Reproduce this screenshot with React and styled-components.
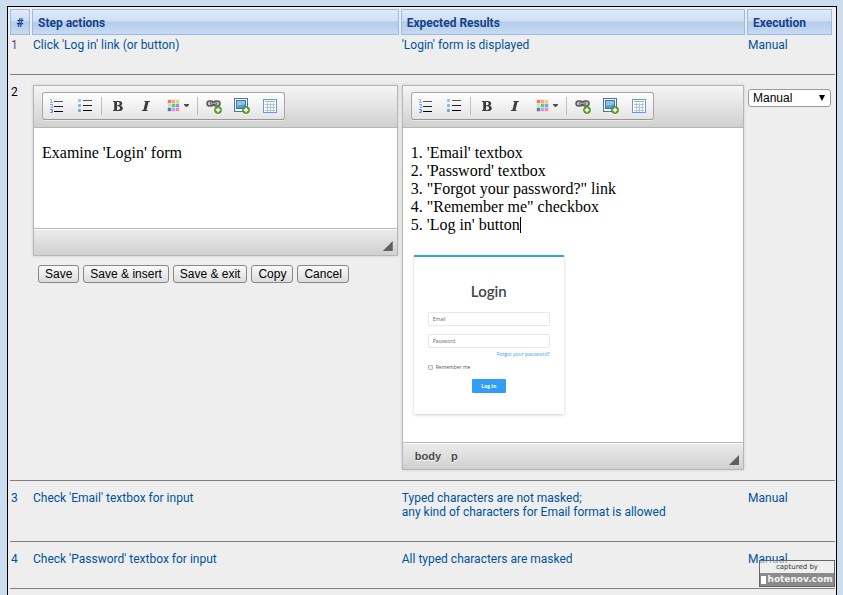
import React from 'react';
import styled, { createGlobalStyle } from 'styled-components';

const GlobalStyle = createGlobalStyle`
  *, *::before, *::after { box-sizing: border-box; }
  body {
    margin: 0;
    background: #ccdded;
    color: #000;
    font: 12px/14px "Trebuchet MS", Roboto, sans-serif;
  }
`;

const Page = styled.main`
  display: flex;
  min-height: 100vh;
  padding: 6px 6px 0 7px;
`;

const Panel = styled.section`
  position: relative;
  flex: 1;
  min-width: 0;
  padding: 2px 1px 6px 2px;
  background: #eee;
  border: 1px solid #000;
  border-bottom: 0;
`;

const StepsTable = styled.table`
  width: 100%;
  table-layout: fixed;
  border-spacing: 0;
`;

const Column = styled.col`
  width: ${(p) => p.$width};
`;

const HeadCell = styled.th`
  padding: 0 2px 0 0;
  text-align: left;
  &:last-child { padding-right: 3px; }
`;

const HeadLabel = styled.div`
  height: 26px;
  padding: 0 5px;
  overflow: hidden;
  border: 1px solid #99bbe8;
  background: linear-gradient(#dfeaf7 0, #cfdff2 11px, #b4cbea 12px, #c6daf4 100%);
  color: #15428b;
  font-weight: bold;
  line-height: 26px;
  text-align: ${(p) => (p.$center ? 'center' : 'left')};
`;

const Cell = styled.td`
  padding: ${(p) => (p.$first ? '3px' : '10px')} 3px ${(p) => (p.$editing ? '10px' : '22px')} 1px;
  border-bottom: 1px solid #808080;
  vertical-align: top;
  color: ${(p) => p.$color || '#00529c'};
`;

const EditorFrame = styled.div`
  border: 1px solid #b6b6b6;
  box-shadow: 0 0 3px rgba(0, 0, 0, 0.15);
  background: #fff;
`;

const EditorTop = styled.div`
  display: flex;
  padding: 6px 8px 7px;
  border-bottom: 1px solid #b6b6b6;
  background: linear-gradient(#f5f5f5, #cfd1cf);
`;

const ToolGroup = styled.div`
  display: flex;
  height: 28px;
  border: 1px solid #a6a6a6;
  border-bottom-color: #979797;
  border-radius: 3px;
  background: linear-gradient(#fff, #e4e4e4);
  box-shadow: 0 1px 0 rgba(255, 255, 255, 0.5);
`;

const ToolButton = styled.button`
  display: flex;
  align-items: center;
  gap: 2px;
  padding: 0 6px;
  border: 0;
  background: none;
`;

const Separator = styled.span`
  width: 1px;
  height: 18px;
  margin: 4px 2px;
  background: #c0c0c0;
`;

const EditorBody = styled.div`
  min-height: 100px;
  padding: 16px 8px 28px;
  outline: 0;
  color: #000;
  font: 16px/18px "Liberation Serif", serif;
`;

const Caret = styled.span`
  display: inline-block;
  width: 1px;
  height: 16px;
  background: #000;
  vertical-align: text-bottom;
`;

const EditorBottom = styled.div`
  display: flex;
  align-items: center;
  justify-content: space-between;
  height: 27px;
  padding: 0 4px 0 12px;
  border-top: 1px solid #b6b6b6;
  background: linear-gradient(#ebebeb, #cfd1cf);
  box-shadow: inset 0 1px 0 #fff;
`;

const ElementPath = styled.div`
  display: flex;
  gap: 10px;
  color: #484848;
  font: bold 11px/14px "Liberation Sans", sans-serif;
  text-shadow: 0 1px 0 #fff;
`;

const ResizeHandle = styled.span`
  align-self: flex-end;
  width: 10px;
  height: 10px;
  margin-bottom: 4px;
  background: #606060;
  clip-path: polygon(100% 0, 100% 100%, 0 100%);
`;

const ActionBar = styled.div`
  display: flex;
  flex-wrap: wrap;
  gap: 4px;
  padding: 9px 5px 0;
`;

const ActionButton = styled.button`
  height: 18px;
  padding: 0 6px;
  border: 1px solid #888;
  border-radius: 3px;
  background: linear-gradient(#fafafa, #dcdcdc);
  color: #000;
  font: 12px/14px "Liberation Sans", sans-serif;
`;

const SelectWrap = styled.div`
  position: relative;
  margin-top: 4px;
  padding-right: 1px;
  &::after {
    content: "";
    position: absolute;
    top: 6px;
    right: 7px;
    width: 6px;
    height: 6px;
    background: #000;
    clip-path: polygon(0 0, 100% 0, 50% 100%);
    pointer-events: none;
  }
`;

const Select = styled.select`
  display: block;
  appearance: none;
  width: 100%;
  height: 18px;
  padding: 0 4px;
  border: 1px solid #9a9a9a;
  border-radius: 3px;
  background: #fff;
  color: #000;
  font: 12px/16px "Liberation Sans", sans-serif;
`;

const LoginCard = styled.div`
  display: flex;
  flex-direction: column;
  width: 150px;
  margin: 21px 0 0 3px;
  padding: 25px 14px 21px;
  border-top: 2px solid #3b9df0;
  box-shadow: 0 1px 3px rgba(0, 0, 0, 0.2);
  color: #555;
  font: 5px/6px "Open Sans", sans-serif;
`;

const LoginTitle = styled.div`
  margin-bottom: 12px;
  color: #444;
  font-family: Lato, sans-serif;
  font-size: 15px;
  font-weight: 600;
  line-height: 18px;
  text-align: center;
`;

const LoginInput = styled.input`
  height: 14px;
  margin-bottom: ${(p) => (p.$last ? '3px' : '8px')};
  padding: 0 4px;
  border: 1px solid #e8e8e8;
  border-radius: 1px;
  font: inherit;
  &::placeholder { color: #666; }
`;

const ForgotLink = styled.a`
  align-self: flex-end;
  color: #3b9df0;
  text-decoration: none;
`;

const Remember = styled.label`
  display: flex;
  align-items: center;
  gap: 3px;
  margin: 7px 0 9px;
`;

const Tick = styled.input`
  appearance: none;
  width: 5px;
  height: 5px;
  margin: 0;
  border: 1px solid #bbb;
  border-radius: 1px;
  background: #eee;
`;

const LoginButton = styled.button`
  align-self: center;
  width: 34px;
  height: 14px;
  padding: 0;
  border: 0;
  border-radius: 1px;
  background: #339cf5;
  color: #fff;
  font: inherit;
  font-weight: bold;
`;

const Badge = styled.aside`
  position: absolute;
  right: 1px;
  top: 553px;
  width: 76px;
  border: 1px solid #666;
  background: rgba(238, 238, 238, 0.6);
  color: #333;
  font: 7px/12px "DejaVu Sans", sans-serif;
  text-align: center;
`;

const BadgeSite = styled.div`
  display: flex;
  align-items: center;
  justify-content: center;
  gap: 1px;
  height: 13px;
  background: #8b8b8b;
  color: #f4f4f4;
  font: bold 9px/13px "DejaVu Sans", sans-serif;
`;

const BadgeMark = styled.span`
  width: 5px;
  height: 8px;
  background: #fff;
`;

const Icon = ({ children }) => (
  <svg width="16" height="16" viewBox="0 0 16 16" aria-hidden="true">{children}</svg>
);

const NumberedIcon = () => (
  <Icon>
    <path d="M5 3.500h9" stroke="#555" />
    <path d="M5 8.500h9" stroke="#222" />
    <path d="M5 13.500h9" stroke="#000" />
    <path d="M1 1.500h1.500v3M1 4.500h3" stroke="#8db8ee" fill="none" />
    <path d="M1 6.500h2.500v1.500l-1.500 1.500h2" stroke="#75a7e9" fill="none" />
    <path d="M1 11.500h2.500v3h-2.500M2 13h2" stroke="#6096e0" fill="none" />
  </Icon>
);

const BulletIcon = () => (
  <Icon>
    <path d="M6 2.500h9" stroke="#555" />
    <path d="M6 7.500h9" stroke="#222" />
    <path d="M6 12.500h9" stroke="#000" />
    <rect x="1" y="1" width="3" height="3" rx="1" fill="#9bc1f3" />
    <rect x="1" y="6" width="3" height="3" rx="1" fill="#83b1ef" />
    <rect x="1" y="11" width="3" height="3" rx="1" fill="#6ca1ea" />
  </Icon>
);

const BoldIcon = () => (
  <Icon>
    <path fill="#3c3c3c" fillRule="evenodd" d="M3 3h6c2.200 0 3.200.9 3.200 2.500 0 1.200-.7 1.900-1.900 2.200 1.600.2 2.500 1.100 2.500 2.500 0 1.900-1.400 2.800-3.700 2.800H3v-1h1.200V4H3zM7 4v3.300h.9c1.200 0 1.700-.5 1.700-1.700C9.600 4.500 9.100 4 8 4zm0 4.300V12h1c1.400 0 2-.6 2-1.900s-.7-1.800-2-1.800z" />
  </Icon>
);

const ItalicIcon = () => (
  <Icon>
    <path fill="#3c3c3c" d="M6.500 3h5.500l-.2 1h-1.300l-2.100 8h1.200l-.3 1H3.800l.3-1h1.300l2.100-8H6.300z" />
  </Icon>
);

const swatches = ['#fb6f6b', '#fba66f', '#eed36b', '#c5eaa8', '#53d07a', '#69a9f2', '#5a7bb5', '#cf9be3', '#f38bad'];

const ColorIcon = () => (
  <Icon>
    {swatches.map((c, i) => (
      <rect key={c} x={2 + (i % 3) * 4} y={2 + Math.floor(i / 3) * 4} width="3" height="3" fill={c} stroke={c} strokeWidth="0.400" />
    ))}
  </Icon>
);

const DropArrow = () => (
  <svg width="5" height="4" viewBox="0 0 5 4" aria-hidden="true"><path d="M0 0h5v1L3 3H2L0 1z" fill="#505050" /></svg>
);

const PlusBadge = () => (
  <>
    <circle cx="12" cy="12" r="3.500" fill="#5fa528" stroke="#3f7f1c" strokeWidth="0.700" />
    <path d="M12 9.800v4.400M9.800 12h4.400" stroke="#fff" strokeWidth="1.400" />
  </>
);

const LinkIcon = () => (
  <Icon>
    <g fill="#c4c4c4" stroke="#5a5a5a" strokeWidth="1.500">
      <rect x="1" y="3" width="6.500" height="5" rx="2.500" />
      <rect x="7.500" y="3" width="6.500" height="5" rx="2.500" />
    </g>
    <path d="M4 5.500h7" stroke="#484848" strokeWidth="2" />
    <path d="M4.500 5.300h6" stroke="#ddd" strokeWidth="0.800" />
    <PlusBadge />
  </Icon>
);

const ImageIcon = () => (
  <Icon>
    <rect x="0.500" y="0.500" width="13" height="13" fill="#f8fbff" stroke="#4672ad" />
    <rect x="2.500" y="2.500" width="9" height="8" fill="#8fc1ea" stroke="#45759f" />
    <path d="M3 8.500C5 6.500 8 8 11 6v4H3z" fill="#559bcf" />
    <PlusBadge />
  </Icon>
);

const TableIcon = () => (
  <Icon>
    <rect x="1.500" y="1.500" width="13" height="13" fill="#fff" stroke="#6b9ad7" />
    <path d="M3 3.500h10" stroke="#8fc77c" />
    <path d="M3 6.500h10M3 9.500h10M3 12.500h10M5.500 5v9M8.500 5v9M11.500 5v9" stroke="#aac4e8" />
  </Icon>
);

const Toolbar = () => (
  <EditorTop>
    <ToolGroup role="toolbar" aria-label="Formatting">
      <ToolButton aria-label="Numbered list"><NumberedIcon /></ToolButton>
      <ToolButton aria-label="Bulleted list"><BulletIcon /></ToolButton>
      <Separator />
      <ToolButton aria-label="Bold"><BoldIcon /></ToolButton>
      <ToolButton aria-label="Italic"><ItalicIcon /></ToolButton>
      <ToolButton aria-label="Text color"><ColorIcon /><DropArrow /></ToolButton>
      <Separator />
      <ToolButton aria-label="Link"><LinkIcon /></ToolButton>
      <ToolButton aria-label="Image"><ImageIcon /></ToolButton>
      <ToolButton aria-label="Table"><TableIcon /></ToolButton>
    </ToolGroup>
  </EditorTop>
);

const Editor = ({ label, path = [], children }) => (
  <EditorFrame>
    <Toolbar />
    <EditorBody role="textbox" aria-multiline="true" aria-label={label} contentEditable suppressContentEditableWarning>
      {children}
    </EditorBody>
    <EditorBottom>
      <ElementPath>{path.map((p) => <span key={p}>{p}</span>)}</ElementPath>
      <ResizeHandle />
    </EditorBottom>
  </EditorFrame>
);

const LoginPreview = () => (
  <LoginCard contentEditable={false}>
    <LoginTitle>Login</LoginTitle>
    <LoginInput type="email" placeholder="Email" aria-label="Email" />
    <LoginInput $last type="password" placeholder="Password" aria-label="Password" />
    <ForgotLink href="#forgot">Forgot your password?</ForgotLink>
    <Remember><Tick type="checkbox" />Remember me</Remember>
    <LoginButton type="button">Log in</LoginButton>
  </LoginCard>
);

const StepRow = ({ number, actions, expected, first, numberColor }) => (
  <tr>
    <Cell $first={first} $color={numberColor}>{number}</Cell>
    <Cell $first={first}>{actions}</Cell>
    <Cell $first={first}>{expected}</Cell>
    <Cell $first={first}>Manual</Cell>
  </tr>
);

export default function App() {
  return (
    <Page>
      <GlobalStyle />
      <Panel>
        <StepsTable>
          <colgroup>
            <Column $width="22px" />
            <Column $width="44.7%" />
            <Column />
            <Column $width="88px" />
          </colgroup>
          <thead>
            <tr>
              <HeadCell><HeadLabel $center>#</HeadLabel></HeadCell>
              <HeadCell><HeadLabel>Step actions</HeadLabel></HeadCell>
              <HeadCell><HeadLabel>Expected Results</HeadLabel></HeadCell>
              <HeadCell><HeadLabel>Execution</HeadLabel></HeadCell>
            </tr>
          </thead>
          <tbody>
            <StepRow first number="1" numberColor="#5c4a9c" actions="Click 'Log in' link (or button)" expected="'Login' form is displayed" />
            <tr>
              <Cell $editing $color="#000">2</Cell>
              <Cell $editing>
                <Editor label="Step actions">Examine 'Login' form</Editor>
                <ActionBar>
                  {['Save', 'Save & insert', 'Save & exit', 'Copy', 'Cancel'].map((t) => (
                    <ActionButton key={t} type="button">{t}</ActionButton>
                  ))}
                </ActionBar>
              </Cell>
              <Cell $editing>
                <Editor label="Expected results" path={['body', 'p']}>
                  <div>1. 'Email' textbox</div>
                  <div>2. 'Password' textbox</div>
                  <div>3. "Forgot your password?" link</div>
                  <div>4. "Remember me" checkbox</div>
                  <div>5. 'Log in' button<Caret /></div>
                  <LoginPreview />
                </Editor>
              </Cell>
              <Cell $editing>
                <SelectWrap>
                  <Select aria-label="Execution type" defaultValue="Manual">
                    <option>Manual</option>
                    <option>Automated</option>
                  </Select>
                </SelectWrap>
              </Cell>
            </tr>
            <StepRow
              number="3"
              actions="Check 'Email' textbox for input"
              expected={<>Typed characters are not masked;<br />any kind of characters for Email format is allowed</>}
            />
            <StepRow number="4" actions="Check 'Password' textbox for input" expected="All typed characters are masked" />
          </tbody>
        </StepsTable>
        <Badge>
          captured by
          <BadgeSite><BadgeMark />hotenov.com</BadgeSite>
        </Badge>
      </Panel>
    </Page>
  );
}
